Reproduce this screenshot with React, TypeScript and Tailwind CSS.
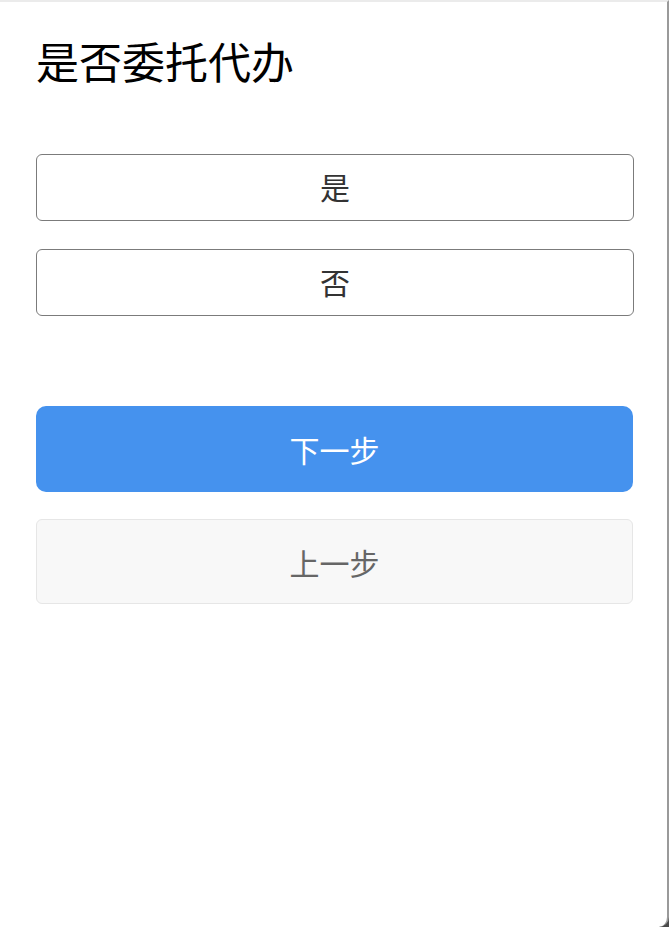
import React from 'react';

const options = ['是', '否'];

export default function App(): React.JSX.Element {
  return (
    <div className="h-[927px] w-[669px] bg-[#4a4a4a]" style={{fontFamily: '"Microsoft YaHei", "Noto Sans CJK SC", "Noto Sans", sans-serif'}}>
      <div className="h-full w-full bg-white border-t-2 border-t-[#ebebeb] border-r-2 border-r-[#9a9a9a] rounded-br-[10px] pt-[37px] pl-9 pr-[33px]">
        <h1 className="text-[43px] leading-none font-normal text-black h-[43px]">是否委托代办</h1>

        <div className="mt-[72px] flex flex-col gap-[28px]">
          {options.map((opt) => (
            <button
              key={opt}
              className="h-[67px] w-full rounded-[6px] border border-[#7b7b7b] bg-white flex items-center justify-center pb-1 text-[30px] leading-none text-[#333]">
              {opt}
            </button>
          ))}
        </div>

        <div className="mt-[90px] flex flex-col gap-[27px] pr-px">
          <button className="h-[86px] w-full rounded-[10px] bg-[#4592ee] flex items-center justify-center text-[30px] leading-none text-white">
            下一步
          </button>
          <button className="h-[85px] w-full rounded-[6px] border border-[#e6e6e6] bg-[#f8f8f8] flex items-center justify-center text-[30px] leading-none text-[#666]">
            上一步
          </button>
        </div>
      </div>
    </div>
  );
}
